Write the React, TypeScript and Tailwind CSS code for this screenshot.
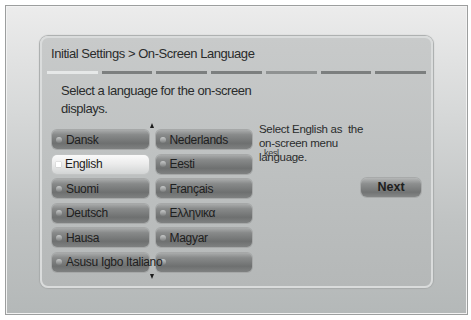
import React from "react";

const font = { fontFamily: '"Liberation Sans", Arial, sans-serif' };

function LangButton({ label, selected, wide }: { label: string; selected?: boolean; wide?: boolean }) {
  return (
    <div
      className={
        "relative flex h-[19px] items-center rounded-[5px] pl-[4px] " +
        (selected
          ? "bg-[linear-gradient(to_bottom,#fafafa_0%,#ececec_45%,#d2d4d4_100%)] shadow-[0_0_0_1px_#c2c4c4]"
          : "bg-[linear-gradient(to_bottom,#a9abab_0%,#888a8a_25%,#6e7070_70%,#7f8181_100%)] shadow-[0_0_0_1px_#a6a8a8]")
      }
    >
      {selected ? (
        <span className="h-[5px] w-[5px] shrink-0 bg-white shadow-[0_0_1px_#999]" />
      ) : (
        <span className="h-[6px] w-[6px] shrink-0 rounded-full bg-[linear-gradient(to_bottom,#c8caca,#7a7c7c)]" />
      )}
      <span
        className={
          "ml-[4px] whitespace-nowrap text-[12px] leading-none tracking-[-0.3px] text-[#1e2020] " +
          (wide ? "relative z-10" : "")
        }
      >
        {label}
      </span>
    </div>
  );
}

export default function App() {
  const rows: [string, string][] = [
    ["Dansk", "Nederlands"],
    ["English", "Eesti"],
    ["Suomi", "Français"],
    ["Deutsch", "Ελληνικα"],
    ["Hausa", "Magyar"],
    ["Asusu Igbo  Italiano", ""],
  ];
  return (
    <div className="h-[320px] w-[471px] bg-white p-[5px]" style={font}>
      <div className="h-[310px] w-[463px] border border-[#9c9e9e] bg-[linear-gradient(to_bottom,#ececec_0%,#d6d8d8_35%,#c0c3c3_70%,#b4b8b8_100%)] pb-[26px] pl-[34px] pr-[34px] pt-[30px] shadow-[inset_0_0_0_1px_#f2f2f2]">
        <div className="flex h-[252px] flex-col rounded-[8px] border-2 border-[#dadcdc] bg-[linear-gradient(to_bottom,#c8caca_0%,#bec1c1_50%,#b5b8b8_100%)] shadow-[0_0_1px_1px_#a8abab]">
          <div className="whitespace-nowrap pl-[9px] pt-[8px] text-[13px] leading-[15px] tracking-[-0.45px] text-[#2a2c2c]">
            Initial Settings &gt; On-Screen Language
          </div>
          <div className="mx-[5px] mt-[10px] flex gap-[4px]">
            <div className="h-[3px] flex-1 bg-[#e6e8e8]" />
            <div className="h-[3px] flex-1 bg-[#7c7f7f]" />
            <div className="h-[3px] flex-1 bg-[#7c7f7f]" />
            <div className="h-[3px] flex-1 bg-[#7c7f7f]" />
            <div className="h-[3px] flex-1 bg-[#8f9292]" />
            <div className="h-[3px] flex-1 bg-[#7c7f7f]" />
            <div className="h-[3px] flex-1 bg-[#7c7f7f]" />
          </div>
          <div className="flex pl-[10px]">
            <div className="w-[200px]">
              <div className="whitespace-nowrap pl-[9px] pt-[8px] text-[13px] leading-[18px] tracking-[-0.45px] text-[#2a2c2c]">
                Select a language for the on-screen
                <br />
                displays.
              </div>
              <div className="flex h-[12px] items-end justify-center pb-[2px]">
                <span className="h-0 w-0 border-x-[2.5px] border-b-[5px] border-x-transparent border-b-[#1c1c1c]" />
              </div>
              <div className="grid grid-cols-2 gap-x-[7px] gap-y-[5.5px]">
                {rows.map(([a, b], i) => (
                  <React.Fragment key={i}>
                    <LangButton label={a} selected={a === "English"} wide={i === 5} />
                    <LangButton label={b} />
                  </React.Fragment>
                ))}
              </div>
              <div className="flex h-[10px] items-center justify-center">
                <span className="h-0 w-0 border-x-[2.5px] border-t-[5px] border-x-transparent border-t-[#1c1c1c]" />
              </div>
            </div>
            <div className="ml-[7px] flex flex-1 flex-col pt-[48px]">
              <div className="whitespace-nowrap text-[11.5px] leading-[14px] tracking-[-0.3px] text-[#2a2c2c]">
                Select English as&nbsp; the
                <br />
                on-screen menu
                <br />
                <span className="relative">
                  language.
                  <span className="absolute left-[5px] top-[-5px] text-[9px] text-[#3a3c3c]">kesl</span>
                </span>
              </div>
              <div className="mr-[10px] mt-[14px] flex justify-end">
                <div className="flex h-[19px] w-[60px] items-center justify-center rounded-[6px] bg-[linear-gradient(to_bottom,#b5b7b7_0%,#8d8f8f_30%,#727474_75%,#858787_100%)] text-[12.5px] font-bold text-[#1e2020] shadow-[0_0_0_1px_#a8aaaa]">
                  Next
                </div>
              </div>
            </div>
          </div>
        </div>
      </div>
    </div>
  );
}
